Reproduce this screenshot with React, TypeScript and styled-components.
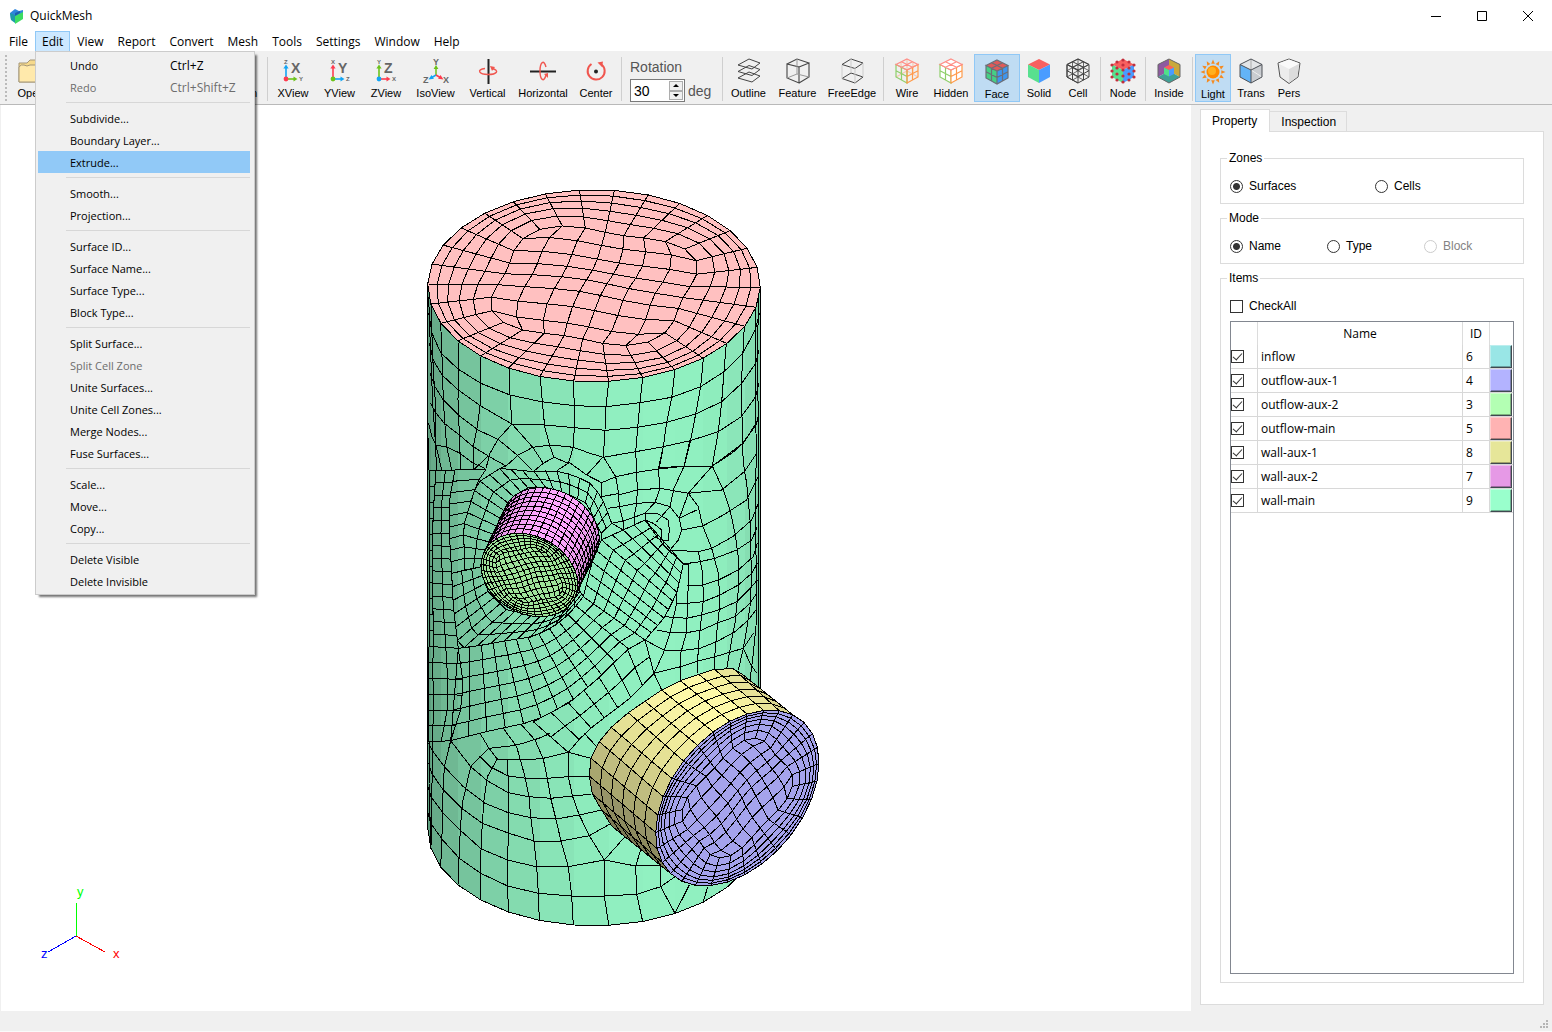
import React, { useState } from "react";
import styled, { createGlobalStyle, css } from "styled-components";

const ui = `"Open Sans", "Noto Sans", sans-serif`;
const arial = `"Liberation Sans", Arial, sans-serif`;

const Global = createGlobalStyle`
  *, *::before, *::after { box-sizing: border-box; }
  html, body { margin: 0; padding: 0; background: #fff; }
  body { font: 12px/16px ${ui}; color: #000; }
  button, input { font: inherit; color: inherit; }
`;

/* ---------- geometry of the mesh ---------- */

type P = [number, number];

const parse = (s: string): P[] =>
  s.trim().split(/\s+/).map((t) => t.split(",").map(Number) as P);

const mix = (a: P, b: P, t: number): P => [a[0] + (b[0] - a[0]) * t, a[1] + (b[1] - a[1]) * t];

const toPath = (pts: P[], close = false) =>
  "M" + pts.map((p) => `${p[0].toFixed(1)} ${p[1].toFixed(1)}`).join("L") + (close ? "Z" : "");

const resample = (pts: P[], m: number): P[] => {
  const acc = [0];
  for (let i = 1; i < pts.length; i++)
    acc.push(acc[i - 1] + Math.hypot(pts[i][0] - pts[i - 1][0], pts[i][1] - pts[i - 1][1]));
  const total = acc[acc.length - 1];
  const out: P[] = [];
  let j = 1;
  for (let i = 0; i <= m; i++) {
    const d = (total * i) / m;
    while (j < pts.length - 1 && acc[j] < d) j++;
    out.push(mix(pts[j - 1], pts[j], Math.min(1, (d - acc[j - 1]) / (acc[j] - acc[j - 1]))));
  }
  return out;
};

/* A band of quads between two curves: m cells along, n cells across. */
const band = (a: string, b: string, m: number, n: number): P[][] => {
  const A = resample(parse(a), m);
  const B = resample(parse(b), m);
  const lines: P[][] = [];
  for (let k = 0; k <= n; k++) lines.push(A.map((p, i) => mix(p, B[i], k / n)));
  for (let i = 0; i <= m; i++) lines.push([A[i], B[i]]);
  return lines;
};

/* Mesh coordinates are three units to the pixel; each section has its own top. */
const place = (lines: P[][], top: number) =>
  lines.map((l) => toPath(l.map(([x, y]) => [410 + x / 3, top + y / 3] as P))).join("");

const rad = (a: number) => (a * Math.PI) / 180;
const shade = (rgb: number[], f: number) => `rgb(${rgb.map((c) => Math.round(c * f)).join(",")})`;

/* Round cap: rings with spokes outside that turn square towards the mapped quad grid inside. */
const capMesh = (disc: (a: number, r: number) => P, nu: number, nv: number, rings: number[], start: number, swirl: number) => {
  const n = 2 * (nu + nv);
  const step = 360 / n;
  const at = (i: number, r: number) =>
    disc(start + i * step, r * (1 + (1 - r) * 0.26 * Math.cos(rad(4 * i * step))));
  const lines: P[][] = [];
  rings.forEach((r) => {
    const ring: P[] = [];
    for (let i = 0; i <= n; i++) ring.push(at(i, r));
    lines.push(ring);
  });
  const core = rings[rings.length - 1];
  for (let i = 0; i < n; i++) lines.push(rings.map((r) => at(i, r)));
  const edge = (i: number) => at(i, core);
  const grid: P[][] = [];
  for (let v = 0; v <= nv; v++) {
    const row: P[] = [];
    for (let u = 0; u <= nu; u++) {
      const s = u / nu;
      const t = v / nv;
      const T = edge(u);
      const R = edge(nu + v);
      const B = edge(2 * nu + nv - u);
      const L = edge(n - v);
      const c = [edge(0), edge(nu), edge(nu + nv), edge(2 * nu + nv)];
      const w = swirl * Math.sin(Math.PI * s) * Math.sin(Math.PI * t);
      const f = (k: 0 | 1) =>
        (1 - t) * T[k] + t * B[k] + (1 - s) * L[k] + s * R[k] -
        ((1 - s) * (1 - t) * c[0][k] + s * (1 - t) * c[1][k] + s * t * c[2][k] + (1 - s) * t * c[3][k]);
      row.push([f(0) + w * Math.sin(5 * t), f(1) + w * Math.cos(5 * s)]);
    }
    grid.push(row);
  }
  grid.forEach((r) => lines.push(r));
  for (let u = 0; u <= nu; u++) lines.push(grid.map((r) => r[u]));
  return lines;
};

/* main cylinder */
const mainAt = (a: number, cy: number, r = 1): P => [594 + 166.3 * r * Math.sin(rad(a)), cy + 96 * r * Math.cos(rad(a))];
const TOP = 285.7;
const BOTTOM = 829.7;
const facets = Array.from({ length: 15 }, (_, i) => {
  const a = -91 + 12 * i;
  return {
    d: toPath([mainAt(a, TOP), mainAt(a + 12, TOP), mainAt(a + 12, BOTTOM), mainAt(a, BOTTOM)], true),
    fill: shade([145, 241, 193], 0.745 + 0.255 * Math.cos(rad(a + 6 - 25))),
  };
});
const outline: P[] = [
  ...Array.from({ length: 16 }, (_, i) => mainAt(-91 + 12 * i, BOTTOM)),
  ...Array.from({ length: 16 }, (_, i) => mainAt(89 - 12 * i, TOP)),
];
const bodyOutline = toPath(outline, true);

const upperLines = [
  "53,345 53,760 56,900", "56,380 60,500 68,700 75,800 80,900",
  "63,403 66,500 70,600 75,680 77,750 78,826 95,900",
  "92,460 96,560 99,660 103,740 110,830 125,900",
  "144,513 145,620 144,690 148,790 152,900",
  "212,560 212,640 210,710 200,780 190,830 190,900",
  "297,597 300,675 306,762 264,808 240,850 228,895",
  "306,762 368,832 400,880",
  "391,622 397,695 404,770 420,830 432,862",
  "490,634 493,705 493,772 490,832 475,880",
  "596,634 588,710 585,780 580,862",
  "698,624 690,698 683,772 677,845 680,900",
  "795,600 785,683 770,757 760,830 748,895", "880,567 872,650 857,732 840,820 822,892",
  "949,520 942,605 935,695 925,785 907,888",
  "1003,470 998,560 994,650 996,740 996,825 1003,900",
  "1038,412 1036,500 1037,600 1037,680 1038,790 1040,850",
  "1045,350 1043,600 1046,890",
  "56,430 66,490 92,548 144,597 212,640 300,675 394,695 493,707 588,710 690,698 785,682 872,650 942,605 998,550 1036,480 1048,430",
  "58,520 70,570 96,615 145,660 212,708 306,762 404,765 493,773 588,781 683,772 770,757 857,732 935,695 995,640 1037,580 1047,540",
  "60,610 75,650 100,690 145,735 204,780 264,808 315,850 365,900",
  "580,862 677,845 760,830 840,812 925,785 994,740 1037,680 1047,640",
  "190,900 235,858", "235,858 288,888 325,855 368,832 425,825 490,832 540,850 580,862",
  "62,700 77,728 103,760 148,795 190,830 235,858",
  "78,826 110,830 150,850 190,880 225,895",
  "748,892 822,890 907,888 996,822 1038,765 1047,730",
  "400,880 432,862 475,880", "56,760 66,800 78,826", "288,888 270,895",
].map(parse);

const middleLines: P[][] = [
  ...[
    "580,50 617,110 625,155 628,200 640,245 640,270",
    "475,65 530,105 580,50", "575,128 575,170", "575,170 628,160",
    "617,110 680,97 745,87 822,79 907,78 965,40 1000,10 1044,-60",
    "530,105 575,128 617,110", "625,165 682,150 750,145 835,160 865,200 878,258 905,325",
    "907,78 870,120 835,160 808,235", "595,205 628,200 680,190 735,187 780,200 808,235 815,270 805,300 780,330",
    "605,250 640,243 672,232 705,220 740,220 775,240 778,270 775,300 755,300 730,290", "705,240 730,250 755,270 755,300",
    "677,35 680,97 682,150 680,190 672,230 675,255",
    "760,20 745,87 750,145 735,187 705,220 705,240 730,275 765,320 820,372",
    "840,0 822,79 792,145 780,200 740,245",
    "907,78 940,150 960,210 975,280 985,350 985,450 975,550 965,600 950,685",
    "1003,90 1010,130 1020,240 1020,300 1025,400 1020,500 1008,580 1000,625 985,690",
    "1040,40 1035,150 1035,260 1040,400 1038,560 1030,640 1020,720",
    "1046,80 1046,740", "878,258 940,225 1010,180 1045,110", "835,160 935,150 1003,95 1040,40",
    "808,235 860,210", "815,270 878,258", "905,325 968,290 1025,240 1045,190", "780,330 865,335 905,325",
    "865,335 878,400 880,480 870,570 865,620 862,700", "905,325 925,400 930,490 920,580 915,640 912,690",
    "820,372 835,372 835,437 832,490 830,575 812,640 812,725",
    "820,372 870,365 915,355 980,330 1025,300 1042,260",
    "832,437 880,435 930,418 985,390 1030,350 1042,310", "800,490 832,490 880,485 930,465 985,435 1025,400 1042,370",
    "765,530 830,535 875,525 925,510 980,485 1025,440 1042,420", "740,570 780,578 830,578 875,570 920,550 975,530 1020,490 1040,460",
    "705,600 765,632 812,632 870,625 920,605 975,575 1015,540 1038,510",
    "732,700 812,680 865,663 915,650 965,635 1000,625 1020,670 1040,700", "1000,625 1030,580",
    "800,460 800,490 780,578 760,640 732,700 755,750", "705,600 732,700",
    "432,52 400,70 370,95", "432,52 475,70 440,92",
  ].map(parse),
  /* rings round the upper half of the small pipe */
  ...band("215,380 245,300 290,190 345,145 400,140 470,160 530,190 573,280", "165,390 160,260 200,130 270,85 370,95 430,92 490,105 540,130 575,170 605,250", 22, 2),
  ...band("165,390 160,260 200,130 228,88", "125,400 118,280 118,180 135,90", 9, 1),
  ...band("573,280 605,250", "573,300 640,270", 1, 1),
  /* columns down the left flank */
  ...band("78,90 72,180 68,260 68,420 70,620", "135,90 118,180 118,280 125,400 130,500 145,625", 14, 2),
  ...band("57,90 57,620", "78,90 72,180 68,260 68,420 70,620", 11, 1),
  /* below the small pipe */
  ...band("215,380 230,450 290,510 390,530 460,515 505,445", "125,400 130,500 145,625 220,615 300,600 370,590 430,560 480,520 520,470", 16, 3),
  ...band("520,470 545,370 573,300 640,270 705,240", "705,600 740,560 765,530 800,460 820,372", 9, 6),
  /* fan down to the lower pipe */
  ...band("145,625 220,615 300,600 370,590 430,560 480,520 520,470", "122,902 240,872 370,845 475,790 560,720 650,630 705,600", 12, 6),
  ...band("370,845 475,790 560,720 650,630 705,600", "475,937 523,880 600,820 655,780 732,700", 7, 2),
  ...band("70,620 68,700 72,800 66,905", "145,625 150,665 158,712 155,800 122,902", 6, 2),
  ...band("57,620 55,905", "70,620 68,700 72,800 66,905", 6, 1),
];

const lowerLines = [
  "122,272 182,350 158,455 152,520 148,600 144,705", "237,295 210,320 182,350",
  "262,327 232,380 222,450 217,520 213,600 212,750", "237,295 262,327",
  "210,250 237,295 300,288 340,280 395,262 420,250",
  "262,327 293,327 295,415 295,490 295,550 293,630 293,705 295,785",
  "280,235 320,290 345,380 357,440 362,500 372,575 380,650 385,730 388,810",
  "335,225 375,270 400,327 412,385 422,445 437,505 453,573 475,650 485,738 490,825",
  "475,307 475,380 488,440 508,495 538,557 583,630 583,738 596,825",
  "523,250 560,290", "543,325 475,307 400,325 350,330 262,327",
  "536,380 475,380 412,385 350,385 295,378 240,350 210,320",
  "543,433 488,438 422,445 357,440 295,428 232,392 182,350",
  "575,480 508,495 437,507 362,503 295,488 225,460 160,410 103,350 66,300 56,280",
  "600,522 538,557 453,573 372,573 297,550 217,520 155,475 100,420 65,370 56,340",
  "645,560 583,630 475,650 378,650 293,630 214,597 150,540 100,490 63,440 54,410",
  "750,647 677,648 583,630", "693,597 677,648 680,733 698,815", "750,647 752,710 795,790 838,705",
  "795,680 752,710 680,733 583,738 485,738 385,730 293,708 212,670 148,625 98,570 62,520 54,490",
  "893,710 880,755", "122,272 103,350 99,430 97,530 92,650",
  "66,275 66,400 64,500 63,590", "57,275 57,400 60,500 60,590",
].map(parse);

const bodyLines = place(upperLines, 170) + place(middleLines, 440) + place(lowerLines, 650);

/* top cap */
const discOutline = toPath(Array.from({ length: 30 }, (_, i) => mainAt(5 + 12 * i, TOP)), true);
const discLines = capMesh((a, r) => mainAt(a, TOP, r), 8, 7, [1, 0.95, 0.888, 0.814, 0.724, 0.61], -151, 5)
  .map((l) => toPath(l)).join("");

/* lower side pipe */
const lowAt = (a: number, r = 1): P => [982 + 245 * r * Math.cos(rad(a)), 444 - 107 * r * Math.cos(rad(a)) + 241 * r * Math.sin(rad(a))];
const lowBack = parse(
  "605,528 575,480 547,432 538,378 543,325 568,275 604,232 655,188 705,154 755,120 811,92 866,73 913,58 970,56 1000,75");
const lowFills = ["#7d7b55", "#8c8a5e", "#969468", "#a9a76f", "#c0bd80", "#d3cf8a", "#e5e195", "#f0eb9c", "#f7f2a4", "#fdf9a8", "#fdf9a8", "#f5f0a0", "#e8e398", "#d8d48e"];
const pipeFacets = lowFills.map((fill, i) => {
  const a = 0.8 + 12 * (12 + i);
  return { fill, d: place([[lowBack[i], lowBack[i + 1], lowAt(a + 12), lowAt(a)]], 650) + "Z" };
});
const pipeLines = place(
  [
    ...lowBack.map((b, i) => [b, lowAt(0.8 + 12 * (12 + i))]),
    ...[0, 1, 2, 3, 4, 5].map((k) => lowBack.map((b, i) => mix(b, lowAt(0.8 + 12 * (12 + i)), k / 6))),
  ], 650);
const lowCap = place([Array.from({ length: 30 }, (_, i) => lowAt(0.8 + 12 * i))], 650) + "Z";
const lowCapLines = place(capMesh(lowAt, 8, 7, [1, 0.965, 0.925, 0.875, 0.81, 0.73, 0.63], 192.8, 14), 650);

/* upper small pipe */
const smallAt = (a: number, r = 1): P => [358 + 145 * r * Math.cos(rad(a)), 405 + 28 * r * Math.cos(rad(a)) + 122 * r * Math.sin(rad(a))];
const shift = (p: P): P => [p[0] + 65, p[1] - 137];
const smallFacets = Array.from({ length: 40 }, (_, i) => i * 9)
  .map((a) => ({ a, p: smallAt(a), q: smallAt(a + 9) }))
  .filter(({ p, q }) => (q[0] - p[0]) * -137 - (q[1] - p[1]) * 65 < 0)
  .map(({ a, p, q }) => ({
    fill: shade([255, 168, 255], 0.72 + 0.28 * Math.cos(rad(a + 4 - 285))),
    d: place([[p, q, shift(q), shift(p)]], 440) + "Z",
    grid: place(Array.from({ length: 10 }, (_, k) => [mix(shift(p), p, k / 10), mix(shift(q), q, k / 10)]), 440),
  }));
const smallCap = place([Array.from({ length: 40 }, (_, i) => smallAt(i * 9))], 440) + "Z";
const smallCapLines = place(capMesh(smallAt, 10, 10, [1, 0.95, 0.89, 0.82, 0.74, 0.66], 200, 6), 440);

const MeshDrawing = () => (
  <svg width="900" height="960" viewBox="0 0 900 960" role="img" aria-label="Surface mesh">
    <defs>
      <clipPath id="body"><path d={bodyOutline} /></clipPath>
      <clipPath id="disc"><path d={discOutline} /></clipPath>
    </defs>
    <g fill="none" stroke="#000" strokeWidth="1" shapeRendering="crispEdges">
      {facets.map((f) => <path key={f.d} d={f.d} fill={f.fill} stroke="none" />)}
      <path d={bodyLines} clipPath="url(#body)" />
      <path d={bodyOutline} />
      <path d={discOutline} fill="#ffc0c0" />
      <path d={discLines} clipPath="url(#disc)" />
      {smallFacets.map((f) => <path key={f.d} d={f.d} fill={f.fill} />)}
      {smallFacets.map((f) => <path key={f.grid} d={f.grid} />)}
      <path d={smallCap} fill="#9fe39a" />
      <path d={smallCapLines} />
      {pipeFacets.map((f) => <path key={f.d} d={f.d} fill={f.fill} stroke="none" />)}
      <path d={pipeLines} />
      <path d={lowCap} fill="#a5a3ec" />
      <path d={lowCapLines} />
      <path d="M76.5 936V903" stroke="#0f0" />
      <path d="M76 936L105 952" stroke="#f00" />
      <path d="M76 936L48 952" stroke="#00f" />
    </g>
    <g fontFamily="Liberation Sans, Arial, sans-serif" fontSize="13">
      <text x="77" y="896" fill="#0f0">y</text>
      <text x="113" y="958" fill="#f00">x</text>
      <text x="41" y="958" fill="#00f">z</text>
    </g>
  </svg>
);

/* ---------- icons ---------- */

const Ico = ({ w = 26, children }: { w?: number; children: React.ReactNode }) => (
  <svg width={w} height="26" viewBox={`0 0 ${w} 26`} fill="none" aria-hidden="true">{children}</svg>
);

const dotColors: Record<string, string> = { r: "#ff3b4e", g: "#6cc21a", b: "#12a5f4" };

const AxisIcon = ({ big, up, side, c }: { big: string; up: string; side: string; c: string }) => (
  <Ico>
    <path d="M6 19V10" stroke={dotColors[c[0]]} strokeWidth="1.6" />
    <path d="M3.4 10.5L6 6.5l2.6 4z" fill={dotColors[c[0]]} />
    <path d="M6 21h8" stroke={dotColors[c[1]]} strokeWidth="1.6" />
    <path d="M13.5 18.4l4 2.6-4 2.6z" fill={dotColors[c[1]]} />
    <circle cx="6" cy="21" r="2.4" fill={dotColors[c[2]]} />
    <g fontFamily="Liberation Sans, Arial, sans-serif" fontWeight="700" fill="#666">
      <text x="11" y="15" fontSize="14">{big}</text>
      <text x="4" y="6" fontSize="6">{up}</text>
      <text x="19" y="23" fontSize="6">{side}</text>
    </g>
  </Ico>
);

const IsoIcon = () => (
  <Ico w={28}>
    <path d="M14 17V10" stroke="#6cc21a" strokeWidth="1.5" />
    <path d="M11.6 11L14 7l2.4 4z" fill="#6cc21a" />
    <path d="M14 17l-5 3" stroke="#12a5f4" strokeWidth="1.5" />
    <path d="M9.5 17L6.5 21.5l5.4-.7z" fill="#12a5f4" />
    <path d="M14 17l5 3" stroke="#ff3b4e" strokeWidth="1.5" />
    <path d="M18.5 17l3 4.5-5.4-.7z" fill="#ff3b4e" />
    <g fontFamily="Liberation Sans, Arial, sans-serif" fontWeight="700" fontSize="9" fill="#666">
      <text x="11" y="7">Y</text><text x="1" y="25">Z</text><text x="21" y="25">X</text>
    </g>
  </Ico>
);

const VerticalIcon = () => (
  <Ico>
    <path d="M13.5 1v25" stroke="#222" strokeWidth="2" />
    <path d="M10 10.5c-9 1-6 6 3 6s12-4 4-6" stroke="#f0564f" strokeWidth="1.4" />
    <path d="M15 8l5 1-3 4z" fill="#f0564f" />
  </Ico>
);
const HorizontalIcon = () => (
  <Ico>
    <path d="M0 13.5h26" stroke="#222" strokeWidth="2" />
    <path d="M16 9c-2-8-6-5-6 4s4 12 6 4" stroke="#f0564f" strokeWidth="1.4" />
    <path d="M14 16l4-1v5z" fill="#f0564f" />
  </Ico>
);
const CenterIcon = () => (
  <Ico>
    <path d="M8.5 6a8.500 8.500 0 1 0 10 .5" stroke="#f0564f" strokeWidth="2" />
    <path d="M14.5 4.5l5.5-1-1 5.5z" fill="#f0564f" />
    <circle cx="13" cy="13.5" r="2" fill="#222" />
  </Ico>
);

const OutlineIcon = () => (
  <Ico>
    {[0, 6.5, 13].map((y) => (
      <path key={y} d={`M2 ${7 + y}L13 ${1 + y}l11 4-8 6z`} stroke="#444" />
    ))}
  </Ico>
);
const FeatureIcon = () => (
  <Ico>
    <path d="M2 6l12 3v16L2 20zM14 9l10-4v14l-10 6M2 6l10-5 12 4" stroke="#444" strokeWidth="1.1" />
    <path d="M12 1v15L2 20M12 16l12 3" stroke="#999" />
  </Ico>
);
const FreeEdgeIcon = () => (
  <Ico>
    <path d="M3 6.5l9-5.5 12 4-8 5.5z" stroke="#444" />
    <path d="M3 20.5l9-5.5 12 4-8 6z" stroke="#444" />
    <path d="M3 7v14M12 1v14M24 5v14M16 10v15" stroke="#ccc" />
  </Ico>
);

const HEX = "M13 1L24 6.5V19L13 25 2 19V6.5z";
const TOPF = "M13 1L24 6.5 13 12 2 6.5z";
const LEFTF = "M2 6.5L13 12V25L2 19z";
const RIGHTF = "M24 6.5L13 12V25L24 19z";
const TOPG = "M7.5 3.7L18.5 9.2M18.5 3.7L7.5 9.2";
const LEFTG = "M7.5 9.2V22M2 12.7L13 18.5";
const RIGHTG = "M18.5 9.2V22M24 12.7L13 18.5";

const WireIcon = ({ back }: { back?: boolean }) => (
  <Ico>
    <g strokeWidth="1.2">
      {back && <path d="M13 1v12M2 19l11-6 11 6M7 16V4M19 16V4" stroke="#f8c8b0" />}
      <path d={LEFTF + LEFTG} stroke="#8fcf6b" fill={back ? "none" : "#fff"} />
      <path d={RIGHTF + RIGHTG} stroke="#ff9a4a" fill={back ? "none" : "#fff"} />
      <path d={TOPF + TOPG} stroke="#ff8d86" fill={back ? "none" : "#fff"} />
    </g>
  </Ico>
);
const SolidFaces = () => (
  <>
    <path d={TOPF} fill="#f8605f" /><path d={LEFTF} fill="#58e08f" /><path d={RIGHTF} fill="#4a9cff" />
  </>
);
const FaceIcon = () => (
  <Ico>
    <path d={TOPF} fill="#e05a5a" /><path d={LEFTF} fill="#45cf85" /><path d={RIGHTF} fill="#3f96ee" />
    <path d={HEX + TOPF + LEFTF + TOPG + LEFTG + RIGHTG} stroke="#6b6f78" strokeWidth="1.2" />
  </Ico>
);
const SolidIcon = () => <Ico><SolidFaces /></Ico>;
const CellIcon = () => (
  <Ico>
    <path d={HEX + TOPF + LEFTF + TOPG + LEFTG + RIGHTG} stroke="#444" />
    <path d="M2 6.5L24 19M24 6.5L2 19M13 1v12M7.5 3.7V16M18.5 3.7V16M2 12.7l11-6 11 6M7.5 22l11-6M18.5 22l-11-6" stroke="#444" strokeWidth=".8" />
  </Ico>
);
const NodeIcon = () => (
  <Ico>
    <SolidFaces />
    {parse("13,2 7,4 19,4 2,7 13,7 24,7 7,10 19,10 13,12 2,13 24,13 7,16 19,16 13,18 2,19 24,19 7,22 19,22 13,24").map(([x, y]) => (
      <circle key={`${x}-${y}`} cx={x} cy={y} r="1.6" fill="#c22f3c" />
    ))}
  </Ico>
);
const InsideIcon = () => (
  <Ico>
    <path d="M13 1L2 6.5V19L13 13z" fill="#8e5aa0" />
    <path d="M13 1l11 5.5V19l-11-6z" fill="#c9a93c" />
    <path d="M2 19l11-6 11 6-11 6z" fill="#3fa096" />
    <path d={HEX} stroke="#666" />
    <path d="M13 7l5 2.5-5 2.5-5-2.5z" fill="#ff5f5b" />
    <path d="M8 9.5l5 2.5v6.5l-5-2.5z" fill="#4fe08a" />
    <path d="M18 9.5l-5 2.5v6.5l5-2.5z" fill="#4a9cff" />
  </Ico>
);
const LightIcon = () => (
  <Ico>
    {Array.from({ length: 12 }, (_, i) => (
      <path key={i} d="M11.2 4.7L13 .5l1.8 4.2z" fill="#f58a1f" transform={`rotate(${i * 30} 13 13)`} />
    ))}
    <circle cx="13" cy="13" r="6.5" fill="#ff8a00" />
    <circle cx="12" cy="12" r="4" fill="#ffb020" />
  </Ico>
);
const TransIcon = () => (
  <Ico>
    <path d={HEX} fill="#e3e5e7" /><path d={LEFTF} fill="#63b4f7" /><path d="M13 12l11-5.5V19L13 25z" fill="#c9ccd0" />
    <path d="M13 1v11" stroke="#aaa" /><path d="M13 12l11 7" stroke="#eee" />
    <path d={HEX + "M2 6.5L13 12L24 6.5M13 12V25"} stroke="#4c5056" />
  </Ico>
);
const PersIcon = () => (
  <Ico>
    <path d="M13 1l11 4-2 14-9 6.5L4 19 2 5z" fill="#ececec" stroke="#555" />
    <path d="M13 11l10-5.5L21.5 18.5 13 25z" fill="#dcdcdc" /><path d="M2.5 5.5L13 11l10.5-5.5L13 1.5z" fill="#fafafa" />
  </Ico>
);
const FolderIcon = () => (
  <Ico>
    <path d="M1 24V5h8l3-3h12v22z" fill="#f6d98b" stroke="#a59778" />
    <path d="M1 24V9q2-3 5-2 3 2 6 0h12v17z" fill="#ffe9ab" stroke="#a59778" />
  </Ico>
);
const ZoomIcon = () => (
  <Ico>
    <circle cx="11" cy="11" r="8" stroke="#333" strokeWidth="2" /><path d="M17 17l7 7" stroke="#222" strokeWidth="3" />
  </Ico>
);

/* ---------- window frame ---------- */

const Window = styled.div`
  display: flex;
  flex-direction: column;
  min-height: 100vh;
  background: #fff;
`;
const TitleBar = styled.header`
  display: flex;
  align-items: center;
  height: 31px;
  padding: 0 1px 0 9px;
  gap: 5px;
`;
const Title = styled.h1`
  flex: 1;
  margin: 0;
  font: 400 12px/16px ${ui};
`;
const Caption = styled.div`
  display: flex;
`;
const CaptionButton = styled.button`
  display: grid;
  place-items: center;
  width: 46px;
  height: 31px;
  padding: 0;
  border: 0;
  background: none;
`;
const MenuBar = styled.nav`
  display: flex;
  height: 21px;
  padding-left: 2px;
  border-bottom: 1px solid #f0f0f0;
`;
const MenuSlot = styled.div`
  position: relative;
`;
const MenuTitle = styled.button<{ $open?: boolean }>`
  display: block;
  height: 21px;
  padding: 0 6px;
  border: 1px solid ${(p) => (p.$open ? "#90c8f6" : "transparent")};
  background: ${(p) => (p.$open ? "#cce8ff" : "none")};
  line-height: 19px;
`;
const Dropdown = styled.div`
  position: absolute;
  z-index: 5;
  top: 20px;
  left: 0;
  width: 220px;
  padding: 2px 4px 2px 2px;
  border: 1px solid #ccc;
  background: #f0f0f0;
  box-shadow: 3px 3px 2px -1px rgba(0, 0, 0, 0.55);
`;
const MenuItem = styled.button<{ $active?: boolean }>`
  display: grid;
  grid-template-columns: 100px 1fr;
  align-items: center;
  width: 100%;
  height: 22px;
  padding: 2px 0 0 32px;
  border: 0;
  background: ${(p) => (p.$active ? "#91c9f7" : "none")};
  font-size: 11px;
  text-align: left;
  white-space: nowrap;
  &:disabled { color: #6d6d6d; }
`;
const Shortcut = styled.span`
  font-size: 12px;
`;
const MenuRule = styled.hr`
  height: 1px;
  margin: 4px 0 4px 28px;
  border: 0;
  background: #d7d7d7;
`;

/* ---------- toolbar ---------- */

const Toolbar = styled.div`
  display: flex;
  align-items: flex-start;
  height: 53px;
  padding: 2px 0 0 5px;
  border-bottom: 1px solid #b9b9b9;
  background: #f0f0f0;
  font: 11px/12px ${arial};
`;
const Handle = styled.div`
  width: 2px;
  height: 46px;
  margin-top: 1px;
  background: repeating-linear-gradient(#bbb 0 2px, transparent 2px 4px);
`;
const Tools = styled.div`
  display: flex;
  padding: 0 2px;
`;
const FileTools = styled(Tools)`
  width: 260px;
  padding: 0 4px;
  justify-content: space-between;
`;
const Divider = styled.div`
  width: 1px;
  height: 44px;
  margin-top: 3px;
  background: #cfcfcf;
`;
const Tool = styled.button<{ $on?: boolean; $w: number }>`
  display: flex;
  flex-direction: column;
  align-items: center;
  gap: 3px;
  width: ${(p) => p.$w}px;
  height: 48px;
  padding: 3px 0 0;
  border: 1px solid transparent;
  background: none;
  white-space: nowrap;
  svg { flex: none; overflow: visible; }
  ${(p) => p.$on && css`
    padding-top: 4px;
    border-color: #90c8f6;
    background: #bfdcf3;
  `}
`;
const Rotation = styled.div`
  display: grid;
  grid-template-columns: 55px auto;
  gap: 3px;
  align-items: center;
  width: 100px;
  padding: 4px 0 0 8px;
  font: 14px/18px ${arial};
  color: #555;
`;
const RotationLabel = styled.label`
  grid-column: 1 / -1;
`;
const SpinBox = styled.div`
  display: flex;
  height: 23px;
  border: 1px solid #7a7a7a;
  background: #fff;
`;
const SpinInput = styled.input`
  flex: 1;
  width: 30px;
  padding: 0 3px;
  border: 0;
  outline: 0;
  background: none;
  color: #000;
  appearance: textfield;
  &::-webkit-inner-spin-button { appearance: none; }
`;
const SpinButtons = styled.div`
  display: flex;
  flex-direction: column;
  width: 15px;
  padding: 1px 1px 1px 0;
`;
const SpinButton = styled.button`
  display: grid;
  place-items: center;
  flex: 1;
  padding: 0;
  border: 1px solid #adadad;
  background: #f0f0f0;
`;

/* ---------- body ---------- */

const Workspace = styled.main`
  display: flex;
  flex: 1;
`;
const Viewport = styled.section`
  position: relative;
  flex: 1;
  overflow: hidden;
  border-left: 1px solid #f0f0f0;
  svg { display: block; margin: -105px 0 0 -1px; }
`;
const Dock = styled.aside`
  display: flex;
  flex-direction: column;
  width: 361px;
  padding: 4px 8px 6px 9px;
  background: #f0f0f0;
  font: 12px/14px ${arial};
`;
const Tabs = styled.div`
  display: flex;
  align-items: flex-end;
  height: 22px;
`;
const Tab = styled.button<{ $on: boolean }>`
  position: relative;
  height: ${(p) => (p.$on ? 23 : 20)}px;
  margin-bottom: ${(p) => (p.$on ? -1 : 0)}px;
  padding: 0 ${(p) => (p.$on ? "12px" : "10px")} 0 11px;
  border: 1px solid #dcdcdc;
  border-left-width: ${(p) => (p.$on ? 1 : 0)}px;
  border-bottom: 0;
  background: ${(p) => (p.$on ? "#fff" : "#f0f0f0")};
`;
const Pane = styled.div`
  display: flex;
  flex: 1;
  flex-direction: column;
  gap: 7px;
  padding: 19px 19px 21px;
  border: 1px solid #dcdcdc;
  background: #fff;
`;
const Group = styled.fieldset<{ $grow?: boolean }>`
  display: flex;
  flex-direction: column;
  flex: ${(p) => (p.$grow ? 1 : "none")};
  min-width: 0;
  margin: 0;
  padding: 12px 9px 8px;
  border: 1px solid #dcdcdc;
`;
const Legend = styled.legend`
  margin-left: -3px;
  padding: 0 2px;
  line-height: 14px;
`;
const Options = styled.div<{ $cols: number }>`
  display: grid;
  grid-template-columns: repeat(${(p) => p.$cols}, ${(p) => (p.$cols === 2 ? 145 : 97)}px);
`;
const Option = styled.label<{ $off?: boolean }>`
  display: flex;
  align-items: center;
  gap: 6px;
  height: 18px;
  color: ${(p) => (p.$off ? "#838383" : "#000")};
`;
const Radio = styled.input`
  appearance: none;
  width: 13px;
  height: 13px;
  margin: 0;
  border: 1px solid #333;
  border-radius: 50%;
  background: #fff;
  &:checked { background: radial-gradient(circle, #333 0 3px, #fff 4px); }
  &:disabled { border-color: #ccc; }
`;
const CheckBox = styled.input`
  display: block;
  appearance: none;
  width: 13px;
  height: 13px;
  margin: 0;
  border: 1px solid #333;
  background: #fff;
  &:checked::after {
    content: "";
    display: block;
    width: 9px;
    height: 5px;
    margin: 2px 0 0 1px;
    border: solid #333;
    border-width: 0 0 1px 1px;
    transform: rotate(-48deg);
  }
`;
const TableFrame = styled.div`
  flex: 1;
  margin-top: 6px;
  border: 1px solid #828790;
`;
const ZoneTable = styled.table`
  width: 100%;
  table-layout: fixed;
  border-collapse: separate;
  border-spacing: 0;
  font: 12px/16px ${ui};
`;
const Head = styled.th`
  height: 23px;
  padding: 0;
  border-right: 1px solid #dcdcdc;
  font-weight: 400;
  &:last-child { border-right: 0; }
`;
const Cell = styled.td<{ $pad?: number }>`
  height: 24px;
  padding: 0 0 0 ${(p) => p.$pad ?? 0}px;
  border-right: 1px solid #d8d8d8;
  border-bottom: 1px solid #d8d8d8;
  &:last-child { border-right: 0; }
`;
const Swatch = styled.button<{ $c: string }>`
  display: block;
  width: 22px;
  height: 23px;
  padding: 0;
  border: 1px solid;
  border-color: rgba(255, 255, 255, 0.35) #404850 #404850 rgba(255, 255, 255, 0.35);
  background: ${(p) => p.$c};
  box-shadow: inset -1px -1px 0 rgba(0, 0, 0, 0.3);
`;
const StatusBar = styled.footer`
  display: flex;
  align-items: flex-end;
  justify-content: flex-end;
  height: 21px;
  padding: 0 3px 2px 0;
  border-bottom: 1px solid #fafafa;
  background: #f0f0f0;
`;

/* ---------- content ---------- */

type Entry = { label: string; key?: string; off?: boolean; active?: boolean };
const editMenu: Entry[][] = [
  [{ label: "Undo", key: "Ctrl+Z" }, { label: "Redo", key: "Ctrl+Shift+Z", off: true }],
  [{ label: "Subdivide..." }, { label: "Boundary Layer..." }, { label: "Extrude...", active: true }],
  [{ label: "Smooth..." }, { label: "Projection..." }],
  [{ label: "Surface ID..." }, { label: "Surface Name..." }, { label: "Surface Type..." }, { label: "Block Type..." }],
  [{ label: "Split Surface..." }, { label: "Split Cell Zone", off: true }, { label: "Unite Surfaces..." }, { label: "Unite Cell Zones..." }, { label: "Merge Nodes..." }, { label: "Fuse Surfaces..." }],
  [{ label: "Scale..." }, { label: "Move..." }, { label: "Copy..." }],
  [{ label: "Delete Visible" }, { label: "Delete Invisible" }],
];

type ToolDef = [string, number, React.ReactNode, boolean?];
const viewTools: ToolDef[] = [
  ["XView", 46, <AxisIcon big="X" up="Z" side="Y" c="bgr" />],
  ["YView", 47, <AxisIcon big="Y" up="X" side="Z" c="rbg" />],
  ["ZView", 46, <AxisIcon big="Z" up="Y" side="X" c="grb" />],
  ["IsoView", 53, <IsoIcon />],
  ["Vertical", 51, <VerticalIcon />],
  ["Horizontal", 60, <HorizontalIcon />],
  ["Center", 46, <CenterIcon />],
];
const edgeTools: ToolDef[] = [
  ["Outline", 47, <OutlineIcon />],
  ["Feature", 51, <FeatureIcon />],
  ["FreeEdge", 58, <FreeEdgeIcon />],
];
const styleTools: ToolDef[] = [
  ["Wire", 42, <WireIcon back />],
  ["Hidden", 46, <WireIcon />],
  ["Face", 46, <FaceIcon />, true],
  ["Solid", 38, <SolidIcon />],
  ["Cell", 40, <CellIcon />],
];
const lightTools: ToolDef[] = [
  ["Light", 36, <LightIcon />, true],
  ["Trans", 40, <TransIcon />],
  ["Pers", 36, <PersIcon />],
];

const zones: [string, number, string][] = [
  ["inflow", 6, "#99e6e6"],
  ["outflow-aux-1", 4, "#b3b3ff"],
  ["outflow-aux-2", 3, "#b3ffb3"],
  ["outflow-main", 5, "#ffb3b3"],
  ["wall-aux-1", 8, "#e6e699"],
  ["wall-aux-2", 7, "#e699e6"],
  ["wall-main", 9, "#99ffcc"],
];

const ToolGroup = ({ items }: { items: ToolDef[] }) => (
  <Tools>
    {items.map(([label, w, icon, on]) => (
      <Tool key={label} $w={w} $on={on} type="button">{icon}{label}</Tool>
    ))}
  </Tools>
);

export default function App() {
  const [angle, setAngle] = useState(30);
  const [zone, setZone] = useState("Surfaces");
  const [mode, setMode] = useState("Name");
  const [tab, setTab] = useState("Property");
  return (
    <Window>
      <Global />
      <TitleBar>
        <svg width="16" height="16" viewBox="0 0 16 16" aria-hidden="true">
          <path d="M1 5l5-4 4 2 4-1v6l-7 3-5 1z" fill="#2f86dd" />
          <path d="M1 5l5 2v8l-4-3z" fill="#1d9aa8" />
          <path d="M6 8l8-4v7l-8 5z" fill="#3ddc63" />
          <path d="M6 8l5-3V3L6 5z" fill="#1c5fae" />
        </svg>
        <Title>QuickMesh</Title>
        <Caption>
          {[["Minimize", "M0 5.5h10"], ["Maximize", "M.5 .5h9v9h-9z"], ["Close", "M0 0l10 10M10 0L0 10"]].map(([n, d]) => (
            <CaptionButton key={n} type="button" aria-label={n}>
              <svg width="10" height="10" viewBox="0 0 10 10" fill="none" stroke="#000"><path d={d} /></svg>
            </CaptionButton>
          ))}
        </Caption>
      </TitleBar>
      <MenuBar>
        {["File", "Edit", "View", "Report", "Convert", "Mesh", "Tools", "Settings", "Window", "Help"].map((m) => (
          <MenuSlot key={m}>
            <MenuTitle type="button" $open={m === "Edit"}>{m}</MenuTitle>
            {m === "Edit" && (
              <Dropdown role="menu">
                {editMenu.map((part, i) => (
                  <React.Fragment key={part[0].label}>
                    {i > 0 && <MenuRule />}
                    {part.map((e) => (
                      <MenuItem key={e.label} type="button" role="menuitem" disabled={e.off} $active={e.active}>
                        <span>{e.label}</span>
                        {e.key && <Shortcut>{e.key}</Shortcut>}
                      </MenuItem>
                    ))}
                  </React.Fragment>
                ))}
              </Dropdown>
            )}
          </MenuSlot>
        ))}
      </MenuBar>
      <Toolbar>
        <Handle />
        <FileTools>
          <Tool type="button" $w={40}><FolderIcon />Open</Tool>
          <Tool type="button" $w={40}><ZoomIcon />Zoom</Tool>
        </FileTools>
        <Divider />
        <ToolGroup items={viewTools} />
        <Divider />
        <Rotation>
          <RotationLabel htmlFor="rotation">Rotation</RotationLabel>
          <SpinBox>
            <SpinInput id="rotation" type="number" value={angle} onChange={(e) => setAngle(Number(e.target.value))} />
            <SpinButtons>
              <SpinButton type="button" aria-label="Increase" onClick={() => setAngle(angle + 1)}>
                <svg width="6" height="3" viewBox="0 0 6 3"><path d="M0 3l3-3 3 3z" /></svg>
              </SpinButton>
              <SpinButton type="button" aria-label="Decrease" onClick={() => setAngle(angle - 1)}>
                <svg width="6" height="3" viewBox="0 0 6 3"><path d="M0 0l3 3 3-3z" /></svg>
              </SpinButton>
            </SpinButtons>
          </SpinBox>
          <span>deg</span>
        </Rotation>
        <Divider />
        <ToolGroup items={edgeTools} />
        <Divider />
        <ToolGroup items={styleTools} />
        <Divider />
        <ToolGroup items={[["Node", 40, <NodeIcon />]]} />
        <Divider />
        <ToolGroup items={[["Inside", 42, <InsideIcon />]]} />
        <Divider />
        <ToolGroup items={lightTools} />
      </Toolbar>
      <Workspace>
        <Viewport><MeshDrawing /></Viewport>
        <Dock>
          <Tabs>
            {["Property", "Inspection"].map((t) => (
              <Tab key={t} type="button" $on={t === tab} onClick={() => setTab(t)}>{t}</Tab>
            ))}
          </Tabs>
          <Pane>
            <Group>
              <Legend>Zones</Legend>
              <Options $cols={2}>
                {["Surfaces", "Cells"].map((z) => (
                  <Option key={z}>
                    <Radio type="radio" name="zones" checked={zone === z} onChange={() => setZone(z)} />{z}
                  </Option>
                ))}
              </Options>
            </Group>
            <Group>
              <Legend>Mode</Legend>
              <Options $cols={3}>
                {["Name", "Type", "Block"].map((z) => (
                  <Option key={z} $off={z === "Block"}>
                    <Radio type="radio" name="mode" disabled={z === "Block"} checked={mode === z} onChange={() => setMode(z)} />{z}
                  </Option>
                ))}
              </Options>
            </Group>
            <Group $grow>
              <Legend>Items</Legend>
              <Option><CheckBox type="checkbox" />CheckAll</Option>
              <TableFrame>
                <ZoneTable>
                  <colgroup><col width="27" /><col /><col width="27" /><col width="23" /></colgroup>
                  <thead><tr><Head /><Head>Name</Head><Head>ID</Head><Head /></tr></thead>
                  <tbody>
                    {zones.map(([name, id, color]) => (
                      <tr key={name}>
                        <Cell><CheckBox type="checkbox" defaultChecked aria-label={name} /></Cell>
                        <Cell $pad={3}>{name}</Cell>
                        <Cell $pad={3}>{id}</Cell>
                        <Cell><Swatch type="button" $c={color} aria-label={`${name} colour`} /></Cell>
                      </tr>
                    ))}
                  </tbody>
                </ZoneTable>
              </TableFrame>
            </Group>
          </Pane>
        </Dock>
      </Workspace>
      <StatusBar>
        <svg width="9" height="9" viewBox="0 0 9 9" fill="#b5b5b5" aria-hidden="true">
          <path d="M6 0h2v2H6zM6 3h2v2H6zM6 6h2v2H6zM3 3h2v2H3zM3 6h2v2H3zM0 6h2v2H0z" />
        </svg>
      </StatusBar>
    </Window>
  );
}
